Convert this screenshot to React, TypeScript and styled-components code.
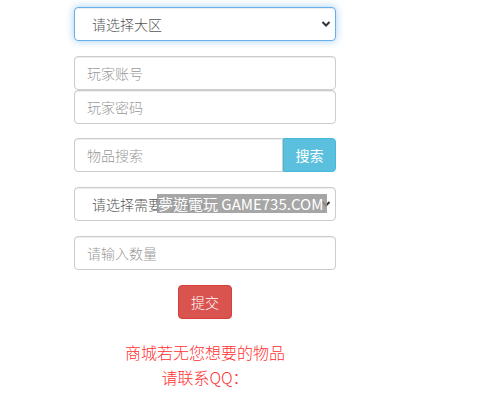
import React from "react";
import styled, { createGlobalStyle } from "styled-components";

const Global = createGlobalStyle`
  html, body { margin: 0; padding: 0; background: #fff; }
  body { font-family: "Noto Sans CJK SC", "Liberation Sans", sans-serif; font-size: 14px; color: #333; font-weight: 300; }
  * { box-sizing: border-box; }
`;

const Page = styled.div`
  padding: 7px 0 0 74px;
`;

const Form = styled.form`
  width: 262px;
  display: flex;
  flex-direction: column;
`;

const Field = styled.div<{ $mt?: number }>`
  margin-top: ${(p) => p.$mt ?? 0}px;
  position: relative;
  display: flex;
`;

const SelectBox = styled.div<{ $focus?: boolean }>`
  position: relative;
  width: 100%;
  height: 34px;
  border: 1px solid ${(p) => (p.$focus ? "#66afe9" : "#ccc")};
  border-radius: 4px;
  box-shadow: ${(p) =>
    p.$focus
      ? "inset 0 1px 1px rgba(0,0,0,.075), 0 0 8px rgba(102,175,233,.6)"
      : "inset 0 1px 1px rgba(0,0,0,.075)"};
  display: flex;
  align-items: center;
  padding: 0 0 0 17px;
  color: #555;
  font-size: 14px;
  background: #fff;
`;

const Chevron = styled.svg`
  position: absolute;
  right: 4px;
  top: 50%;
  margin-top: -4px;
`;

const Input = styled.div<{ $right?: boolean }>`
  flex: 1;
  height: 34px;
  border: 1px solid #ccc;
  border-radius: ${(p) => (p.$right ? "4px 0 0 4px" : "4px")};
  box-shadow: inset 0 1px 1px rgba(0,0,0,.075);
  display: flex;
  align-items: center;
  padding: 0 12px;
  color: #999;
  font-size: 14px;
  background: #fff;
`;

const SearchBtn = styled.div`
  width: 53px;
  height: 34px;
  background: #5bc0de;
  border: 1px solid #46b8da;
  border-radius: 0 4px 4px 0;
  color: #fff;
  display: flex;
  align-items: center;
  justify-content: center;
  font-size: 14px;
  font-weight: 400;
`;

const Submit = styled.div`
  align-self: center;
  margin-top: 15px;
  width: 54px;
  height: 34px;
  background: #d9534f;
  border: 1px solid #d43f3a;
  border-radius: 4px;
  color: #fff;
  display: flex;
  align-items: center;
  justify-content: center;
  font-size: 14px;
`;

const Notice = styled.div`
  margin-top: 21px;
  text-align: center;
  color: #ff3030;
  font-size: 16px;
  line-height: 25px;
`;

const Watermark = styled.div`
  position: absolute;
  left: 83px;
  top: 7px;
  width: 170px;
  height: 19px;
  background: rgba(150, 150, 150, 0.85);
  color: #fff;
  font-size: 15px;
  line-height: 19px;
  font-weight: 400;
  white-space: nowrap;
  overflow: hidden;
  padding-left: 1px;
  font-family: "Noto Sans CJK TC", "Open Sans", sans-serif;
`;

const Arrow = () => (
  <Chevron width="10" height="8" viewBox="0 0 10 8">
    <path d="M1.5 2 L5 5.5 L8.5 2" fill="none" stroke="#333" strokeWidth="2" />
  </Chevron>
);

export default function App() {
  return (
    <Page>
      <Global />
      <Form>
        <Field>
          <SelectBox $focus>
            请选择大区
            <Arrow />
          </SelectBox>
        </Field>
        <Field $mt={15}>
          <Input>玩家账号</Input>
        </Field>
        <Field $mt={0}>
          <Input>玩家密码</Input>
        </Field>
        <Field $mt={14}>
          <Input $right>物品搜索</Input>
          <SearchBtn>搜索</SearchBtn>
        </Field>
        <Field $mt={15}>
          <SelectBox>
            请选择需要的物品
            <Arrow />
          </SelectBox>
          <Watermark>夢遊電玩 GAME735.COM</Watermark>
        </Field>
        <Field $mt={15}>
          <Input>请输入数量</Input>
        </Field>
        <Submit>提交</Submit>
        <Notice>
          商城若无您想要的物品
          <br />
          请联系QQ：
        </Notice>
      </Form>
    </Page>
  );
}
